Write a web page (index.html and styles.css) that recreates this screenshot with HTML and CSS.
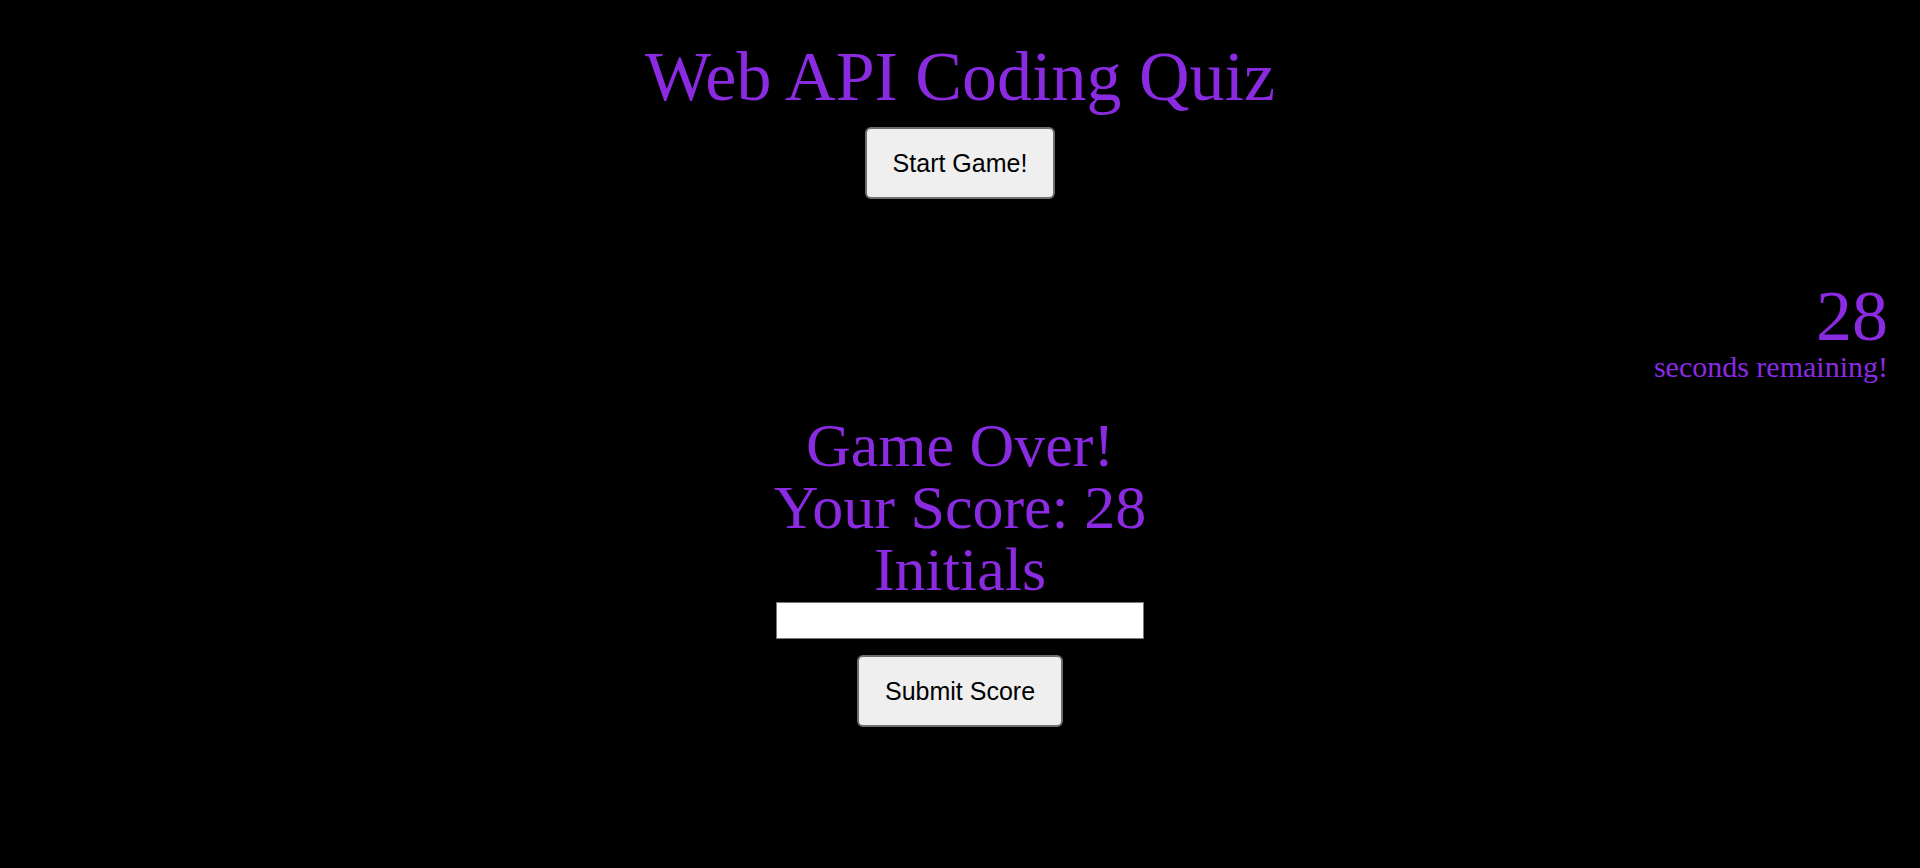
FILE: index.html
```html
<!DOCTYPE html>
<html lang="en">
<head>
<meta charset="utf-8">
<title>Web API Coding Quiz</title>
<link rel="stylesheet" href="styles.css">
</head>
<body>
  <header class="header">
    <h1 class="title">Web API Coding Quiz</h1>
    <button class="btn btn-start" type="button">Start Game!</button>
  </header>
  <section class="timer">
    <div class="timer-count">28</div>
    <div class="timer-label">seconds remaining!</div>
  </section>
  <section class="game-over">
    <div class="game-over-line">Game Over!</div>
    <div class="game-over-line">Your Score: 28</div>
    <label class="game-over-line" for="initials">Initials</label>
    <input class="initials-input" id="initials" type="text">
    <button class="btn btn-submit" type="button">Submit Score</button>
  </section>
</body>
</html>
```
FILE: styles.css
```css
html, body {
  margin: 0;
  padding: 0;
  background: #000;
}

body {
  width: 1920px;
  height: 868px;
  overflow: hidden;
  font-family: "Liberation Serif", "Times New Roman", serif;
  color: #8a2be2;
}

.header {
  display: flex;
  flex-direction: column;
  align-items: center;
  padding-top: 36px;
}

.title {
  margin: 0;
  font-size: 70px;
  font-weight: normal;
  line-height: 82px;
}

.btn {
  font-family: "Liberation Sans", Arial, sans-serif;
  font-size: 25px;
  line-height: 28px;
  color: #000;
  background: #efefef;
  border: 2px solid #6f6f6f;
  border-radius: 6px;
  padding: 20px 26px;
  cursor: pointer;
}

.btn-start {
  margin-top: 9px;
}

.timer {
  display: flex;
  flex-direction: column;
  align-items: flex-end;
  padding-right: 32px;
  margin-top: 81px;
}

.timer-count {
  font-size: 72px;
  line-height: 72px;
}

.timer-label {
  font-size: 30px;
  line-height: 30px;
}

.game-over {
  display: flex;
  flex-direction: column;
  align-items: center;
  margin-top: 32px;
}

.game-over-line {
  display: block;
  font-size: 62px;
  line-height: 62px;
}

.initials-input {
  box-sizing: border-box;
  width: 368px;
  height: 37px;
  margin-top: 2px;
  background: #fff;
  border: 1px solid #767676;
  border-radius: 0;
  padding: 0 4px;
  font-size: 20px;
  font-family: "Liberation Sans", Arial, sans-serif;
}

.btn-submit {
  margin-top: 16px;
}
```
